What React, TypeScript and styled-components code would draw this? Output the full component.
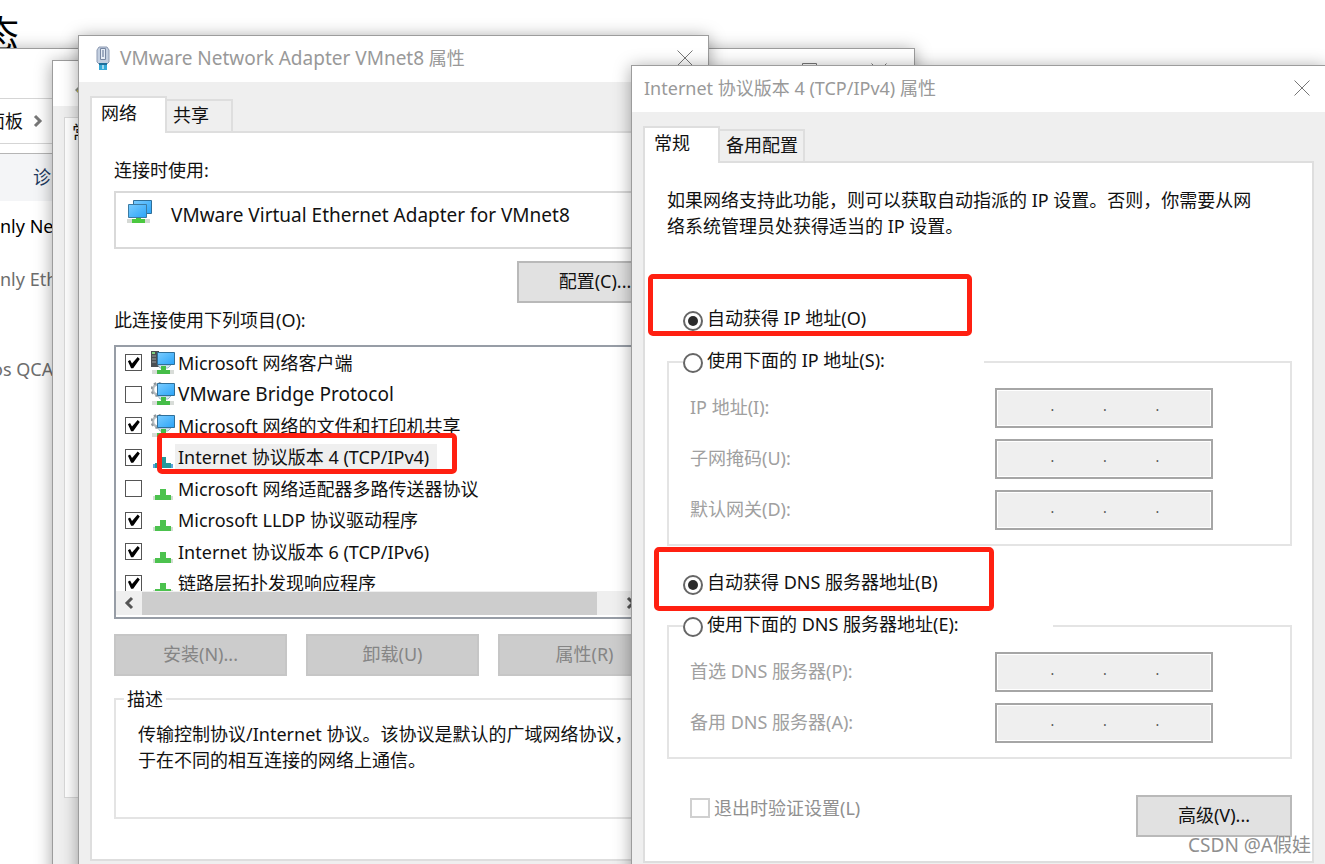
import React from 'react';
import styled, { createGlobalStyle } from 'styled-components';

const GlobalStyle = createGlobalStyle`
  *, *::before, *::after { box-sizing: border-box; }
  body {
    margin: 0;
    background: #fff;
    color: #111;
    font-family: "Noto Sans", "Noto Sans CJK SC", sans-serif;
    font-size: 18px;
    line-height: 26px;
  }
  button, input, fieldset, legend, h1, h2, p, ul { font: inherit; margin: 0; padding: 0; }
`;

const Desktop = styled.main`
  position: relative;
  height: 100vh;
  overflow: hidden;
  white-space: nowrap;
`;

const PageHeading = styled.h1`
  margin: 14px 0 0 -18px;
  font-size: 37px;
  line-height: 40px;
  font-weight: 400;
  color: #000;
`;

/* Device names are set a step larger than the Chinese text */
const DeviceName = styled.span`
  font-size: 19px;
`;

/* Windows */

const Window = styled.section`
  position: absolute;
  display: flex;
  flex-direction: column;
  border: 1px solid #9c9c9c;
  background: #efefef;
  box-shadow: 0 2px 16px rgba(0, 0, 0, 0.36);
`;

const ExplorerWindow = styled(Window)`
  top: 48px;
  left: -1px;
  width: 916px;
  bottom: -40px;
  background: #fff;
`;

const StatusWindow = styled(Window)`
  top: 60px;
  left: 52px;
  width: 560px;
  bottom: -40px;
`;

const AdapterWindow = styled(Window)`
  top: 35px;
  left: 78px;
  width: 631px;
  bottom: -40px;
`;

const ProtocolWindow = styled(Window)`
  top: 65px;
  left: 631px;
  right: -1px;
  bottom: -40px;
`;

const TitleBar = styled.header`
  flex: none;
  display: flex;
  align-items: center;
  height: 46px;
  padding: 0 15px 2px 12px;
  background: #fff;
  color: #999;
`;

const TitleText = styled.h2`
  flex: 1;
  font-weight: 400;
`;

const TitleIcon = styled.span`
  display: flex;
  margin: 0 10px 0 5px;
`;

const IconButton = styled.button`
  display: flex;
  border: 0;
  background: none;
  color: #777;
`;

const WindowBody = styled.div`
  padding: 14px 11px;
`;

/* Tabs */

const TabStrip = styled.div`
  display: flex;
  align-items: flex-end;
  height: 37px;
  margin-bottom: -2px;
  position: relative;
`;

const Tab = styled.button<{ $selected?: boolean }>`
  align-self: ${p => (p.$selected ? 'stretch' : 'flex-end')};
  width: ${p => (p.$selected ? '77px' : 'auto')};
  height: ${p => (p.$selected ? '37px' : '34px')};
  padding: ${p => (p.$selected ? '0 10px 6px 9px' : '0 5px 3px 6px')};
  border: 2px solid #dedede;
  border-left-width: ${p => (p.$selected ? '2px' : '0')};
  border-bottom: ${p => (p.$selected ? '0' : '2px solid #dedede')};
  background: ${p => (p.$selected ? '#fff' : '#efefef')};
  color: #111;
  text-align: left;
`;

const OtherTab = styled(Tab)`
  min-width: 66px;
`;

const TabPanel = styled.div`
  padding: 24px 20px 24px 22px;
  border: 2px solid #dedede;
  background: #fff;
`;

/* Buttons and option controls */

const PushButton = styled.button<{ $wide?: boolean }>`
  width: ${p => (p.$wide ? '173px' : '156px')};
  height: 42px;
  padding-bottom: 2px;
  border: 2px solid #b9b9b9;
  background: #e1e1e1;
  color: #111;
  &:disabled {
    border-color: #c6c6c6;
    background: #ccc;
    color: #858585;
  }
`;

const Checkbox = styled.input<{ $large?: boolean }>`
  appearance: none;
  flex: none;
  width: ${p => (p.$large ? '20px' : '17px')};
  height: ${p => (p.$large ? '20px' : '17px')};
  border: ${p => (p.$large ? '2px solid #d0d0d0' : '1px solid #555')};
  background: #fff;
  &:checked::before {
    content: '';
    display: block;
    height: 100%;
    background: #000;
    clip-path: polygon(13% 42%, 27% 34%, 40% 56%, 78% 14%, 92% 26%, 48% 88%, 34% 88%);
  }
`;

const Radio = styled.input`
  appearance: none;
  flex: none;
  width: 20px;
  height: 20px;
  margin-top: 4px;
  padding: 2px;
  border: 2px solid #666;
  border-radius: 50%;
  background: #fff;
  &:checked {
    padding: 3px;
  }
  &:checked::before {
    content: '';
    display: block;
    width: 10px;
    height: 10px;
    border-radius: 50%;
    background: #2b2b2b;
  }
`;

const OptionLabel = styled.label`
  display: flex;
  align-items: flex-start;
  gap: 4px;
  height: 26px;
  line-height: 22px;
`;

const Highlight = styled.span`
  position: absolute;
  z-index: 1;
  border: 5px solid #ff2011;
  border-radius: 5px;
  pointer-events: none;
`;

/* Groups */

const Group = styled.fieldset`
  min-width: 0;
  border: 2px solid #e4e4e4;
`;

/* Adapter window parts */

const AdapterBox = styled.div`
  display: flex;
  align-items: flex-start;
  gap: 18px;
  height: 58px;
  margin: 8px 0 12px;
  padding: 7px 11px;
  border: 2px solid #d9d9d9;
`;

const AdapterName = styled(DeviceName)`
  padding-top: 2px;
`;

const AdapterPanel = styled(TabPanel)`
  padding-right: 22px;
  padding-bottom: 40px;
`;

const ConfigRow = styled.div`
  display: flex;
  justify-content: flex-end;
  margin-bottom: 4px;
`;

const ListBox = styled.div`
  height: 274px;
  margin-top: 12px;
  border: 2px solid #979da6;
`;

const ItemList = styled.ul`
  display: grid;
  grid-auto-rows: 31px 32px;
  height: 244px;
  overflow: hidden;
  list-style: none;
`;

const Item = styled.li`
  position: relative;
`;

const ItemLabel = styled.label`
  display: flex;
  align-items: center;
  height: 100%;
  padding-left: 9px;
`;

const ItemIcon = styled.svg`
  flex: none;
  width: 24px;
  height: 24px;
  margin-left: 9px;
`;

const ItemText = styled.span<{ $current?: boolean }>`
  padding: 0 8px 0 3px;
  background: ${p => (p.$current ? '#efefef' : 'transparent')};
`;

const ListHighlight = styled(Highlight)`
  top: -8px;
  left: 41px;
  width: 300px;
  height: 41px;
`;

const ScrollBar = styled.div`
  display: flex;
  align-items: center;
  height: 24px;
  background: #efefef;
`;

const ScrollButton = styled(IconButton)`
  width: 26px;
  justify-content: center;
  color: #555;
`;

const ScrollThumb = styled.div`
  width: 455px;
  height: 23px;
  margin-right: 21px;
  background: #cdcdcd;
`;

const ButtonRow = styled.div`
  display: flex;
  gap: 19px;
  margin: 15px 0 10px;
`;

const Description = styled(Group)`
  height: 133px;
  padding: 9px 22px 0;
  legend { margin-left: -14px; padding: 0 3px; }
`;

/* Protocol window parts */

const Intro = styled.p`
  max-width: 601px;
  margin-bottom: 68px;
  white-space: normal;
`;

const AutoOption = styled.div`
  position: relative;
  margin-bottom: 16px;
  padding-left: 16px;
`;

const AddressHighlight = styled(Highlight)`
  top: -33px;
  left: -19px;
  width: 324px;
  height: 62px;
`;

const DnsHighlight = styled(Highlight)`
  top: -24px;
  left: -13px;
  width: 340px;
  height: 64px;
`;

const AddressGroup = styled(Group)<{ $legend: number }>`
  display: block;
  margin-bottom: 25px;
  padding: 13px 77px 14px 21px;
  legend { width: ${p => p.$legend}px; margin-left: -7px; }
`;

const FieldList = styled.div`
  display: flex;
  flex-direction: column;
  gap: 11px;
`;

const FieldRow = styled.div`
  display: flex;
  justify-content: space-between;
  align-items: center;
  color: #a0a0a0;
`;

const FieldLabel = styled.span`
  padding-bottom: 2px;
`;

const IpBox = styled.div`
  display: flex;
  align-items: center;
  width: 218px;
  height: 40px;
  padding: 0 3px 0 5px;
  border: 2px solid #a6a6a6;
  background: #efefef;
  box-shadow: inset 0 0 0 1px #fff;
  color: #555;
  font-size: 14px;
`;

const Octet = styled.input`
  flex: 1;
  min-width: 0;
  height: 26px;
  border: 0;
  background: transparent;
  text-align: center;
`;

const Dot = styled.span`
  width: 4px;
  padding-bottom: 4px;
`;

const Footer = styled.div`
  display: flex;
  justify-content: space-between;
  align-items: flex-start;
  margin-top: 36px;
`;

const ExitOption = styled(OptionLabel)`
  align-items: center;
  padding-left: 23px;
  color: #909090;
`;

const Watermark = styled.div`
  position: absolute;
  right: 14px;
  bottom: 6px;
  font-size: 19px;
  color: #8f8f8f;
  text-shadow: 0 0 2px #fff;
`;

/* Explorer parts */

const ExplorerTitle = styled(TitleBar)`
  height: 49px;
  padding: 0 27px 19px 0;
  justify-content: flex-end;
  align-items: flex-end;
  gap: 54px;
`;

const AddressBar = styled.nav`
  display: flex;
  align-items: center;
  gap: 10px;
  height: 46px;
  margin-bottom: 9px;
  border: 1px solid #d5d5d5;
  border-width: 1px 0;
`;

const Crumb = styled.span`
  margin-left: -13px;
`;

const CommandBar = styled.div`
  display: flex;
  align-items: center;
  height: 48px;
  padding-left: 33px;
  border-top: 1px solid #b5b5b5;
  background: #f4f5f7;
`;

const Command = styled.button`
  border: 0;
  padding-bottom: 2px;
  background: none;
  color: #1e3a5f;
`;

const Connection = styled.p<{ $muted?: boolean; $shift?: boolean }>`
  margin-left: ${p => (p.$shift ? '-8px' : '0')};
  color: ${p => (p.$muted ? '#6d6d6d' : '#000')};
`;

const ConnectionList = styled.div`
  display: grid;
  grid-template-rows: 53px 90px 26px;
  padding-top: 12px;
`;

const StatusTitle = styled(TitleBar)`
  padding-left: 22px;
  height: 45px;
  align-items: flex-end;
  padding-bottom: 12px;
`;

const StatusPanel = styled.div`
  height: 681px;
  margin: 11px;
  border: 1px solid #d9d9d9;
  background: #fff;
  padding: 1px 7px;
`;

/* Drawings */

const CloseIcon = () => (
  <svg width="16" height="16" viewBox="0 0 16 16" fill="none" stroke="currentColor" aria-hidden="true">
    <path d="M.5.5l15 15M15.5.5l-15 15" />
  </svg>
);

const Chevron = ({ back }: { back?: boolean }) => (
  <svg width="10" height="14" viewBox="0 0 10 14" fill="none" stroke="currentColor" strokeWidth="3" aria-hidden="true">
    <path d={back ? 'M8 2L3 7l5 5' : 'M2 2l5 5-5 5'} />
  </svg>
);

const PlugIcon = () => (
  <svg width="14" height="24" viewBox="0 0 14 24" aria-hidden="true">
    <path d="M3 1h8l2 3v12l-2 2H3l-2-2V4z" fill="#c3cfe0" stroke="#8d9ab2" />
    <path d="M4.500 2.500h5v11h-5z" fill="#e6edf6" stroke="#7887a2" />
    <path d="M7 4v7" stroke="#8796b0" strokeWidth="1.500" />
    <path d="M3 17h8v2H3z" fill="#1d6f9b" />
    <path d="M3 19h8v5H3z" fill="#35a9d8" />
    <path d="M6 19h2v4H6z" fill="#9fd8ee" />
  </svg>
);

const ScreenGradient = () => (
  <defs>
    <linearGradient id="screen" x1="0" y1="0" x2="1" y2="1">
      <stop offset="0" stopColor="#7accff" />
      <stop offset="1" stopColor="#2ba4f8" />
    </linearGradient>
  </defs>
);

const AdapterIcon = () => (
  <svg width="26" height="24" viewBox="0 0 26 24" aria-hidden="true">
    <ScreenGradient />
    <path d="M6.500.500h18v13h-18z" fill="url(#screen)" stroke="#2f6f99" />
    <path d="M1.500 4.500h18v13h-18z" fill="url(#screen)" stroke="#3c7ba3" />
    <path d="M0 19h23v4H0z" fill="#d5d9d5" />
    <path d="M9 18h5v1h4v4H5v-4h4z" fill="#4bc83f" />
  </svg>
);

type Kind = 'client' | 'service' | 'protocol';

const NetIcon = ({ kind, current }: { kind: Kind; current?: boolean }) => (
  <ItemIcon viewBox="0 0 24 24" aria-hidden="true">
    {kind === 'protocol' ? (
      <>
        <path d="M2 19h20v4H2z" fill={current ? '#5aa5dc' : '#d3ddd3'} />
        <path d="M9 12h6v6h5v5H4v-5h5z" fill={current ? '#23999a' : '#4cc24e'} />
      </>
    ) : (
      <>
        {kind === 'client' ? (
          <>
            <path d="M0 0h8v16H0z" fill="#4a4f52" />
            <path d="M1 5h4M1 8h4M1 11h4" stroke="#9aa0a3" />
            <path d="M1 1h3v2H1z" fill="#7fd07f" />
          </>
        ) : (
          <>
            <circle cx="7" cy="7.500" r="5" fill="none" stroke="#b4bbbf" strokeWidth="2.500" />
            <circle cx="7" cy="7.500" r="6.500" fill="none" stroke="#8e979c" strokeWidth="2" strokeDasharray="2.500 2.600" />
          </>
        )}
        <path d="M1 19h22v4H1z" fill="#d8dcd8" />
        <path d="M7 14h13l-3 3h-8z" fill="#d9ebf5" stroke="#9db8c8" />
        <path d="M10 15h5v4h4v4H6v-4h4z" fill="#45bd48" />
        <path d="M6.500 1.500h17v12h-17z" fill="url(#screen)" stroke="#2f6f99" />
      </>
    )}
  </ItemIcon>
);

const items: { name: string; kind: Kind; checked: boolean; current?: boolean; device?: boolean }[] = [
  { name: 'Microsoft 网络客户端', kind: 'client', checked: true },
  { name: 'VMware Bridge Protocol', kind: 'service', checked: false, device: true },
  { name: 'Microsoft 网络的文件和打印机共享', kind: 'service', checked: true },
  { name: 'Internet 协议版本 4 (TCP/IPv4)', kind: 'protocol', checked: true, current: true },
  { name: 'Microsoft 网络适配器多路传送器协议', kind: 'protocol', checked: false },
  { name: 'Microsoft LLDP 协议驱动程序', kind: 'protocol', checked: true },
  { name: 'Internet 协议版本 6 (TCP/IPv6)', kind: 'protocol', checked: true },
  { name: '链路层拓扑发现响应程序', kind: 'protocol', checked: true },
];

const IpField = ({ label }: { label: string }) => (
  <FieldRow role="group" aria-label={label}>
    <FieldLabel>{label}</FieldLabel>
    <IpBox>
      {[0, 1, 2, 3].map(n => (
        <React.Fragment key={n}>
          {n > 0 && <Dot>.</Dot>}
          <Octet type="text" disabled aria-label={`${label} ${n + 1}`} />
        </React.Fragment>
      ))}
    </IpBox>
  </FieldRow>
);

const Explorer = () => (
  <ExplorerWindow>
    <ExplorerTitle>
      <IconButton type="button" aria-label="最大化">
        <svg width="16" height="16" viewBox="0 0 16 16" fill="none" stroke="currentColor">
          <path d="M1.500.500h14v14h-14z" />
        </svg>
      </IconButton>
      <IconButton type="button" aria-label="关闭"><CloseIcon /></IconButton>
    </ExplorerTitle>
    <AddressBar>
      <Crumb>面板</Crumb>
      <IconButton type="button" aria-label="展开"><Chevron /></IconButton>
    </AddressBar>
    <CommandBar><Command type="button">诊断</Command></CommandBar>
    <ConnectionList>
      <Connection>nly Ne</Connection>
      <Connection $muted>nly Eth</Connection>
      <Connection $muted $shift>os QCA</Connection>
    </ConnectionList>
  </ExplorerWindow>
);

const Status = () => (
  <StatusWindow>
    <StatusTitle>
      <svg width="8" height="8" viewBox="0 0 8 8" aria-hidden="true">
        <path d="M0 4l4-4h4v8H4z" fill="#8a8f86" />
        <path d="M2 4h3v2H2z" fill="#c3b64a" />
      </svg>
    </StatusTitle>
    <StatusPanel>常</StatusPanel>
  </StatusWindow>
);

const AdapterProperties = () => (
  <AdapterWindow>
    <TitleBar>
      <TitleIcon><PlugIcon /></TitleIcon>
      <TitleText><DeviceName>VMware Network Adapter VMnet8</DeviceName> 属性</TitleText>
      <IconButton type="button" aria-label="关闭"><CloseIcon /></IconButton>
    </TitleBar>
    <WindowBody>
      <TabStrip role="tablist">
        <Tab type="button" role="tab" aria-selected="true" $selected>网络</Tab>
        <OtherTab type="button" role="tab" aria-selected="false">共享</OtherTab>
      </TabStrip>
      <AdapterPanel role="tabpanel">
        <p>连接时使用:</p>
        <AdapterBox>
          <AdapterIcon />
          <AdapterName>VMware Virtual Ethernet Adapter for VMnet8</AdapterName>
        </AdapterBox>
        <ConfigRow><PushButton type="button">配置(C)...</PushButton></ConfigRow>
        <p>此连接使用下列项目(O):</p>
        <ListBox>
          <ItemList>
            {items.map(item => (
              <Item key={item.name}>
                <ItemLabel>
                  <Checkbox type="checkbox" defaultChecked={item.checked} />
                  <NetIcon kind={item.kind} current={item.current} />
                  <ItemText as={item.device ? DeviceItemText : undefined} $current={item.current}>{item.name}</ItemText>
                </ItemLabel>
                {item.current && <ListHighlight />}
              </Item>
            ))}
          </ItemList>
          <ScrollBar>
            <ScrollButton type="button" aria-label="向左滚动"><Chevron back /></ScrollButton>
            <ScrollThumb />
            <ScrollButton type="button" aria-label="向右滚动"><Chevron /></ScrollButton>
          </ScrollBar>
        </ListBox>
        <ButtonRow>
          <PushButton type="button" $wide disabled>安装(N)...</PushButton>
          <PushButton type="button" $wide disabled>卸载(U)</PushButton>
          <PushButton type="button" $wide disabled>属性(R)</PushButton>
        </ButtonRow>
        <Description>
          <legend>描述</legend>
          <p>传输控制协议/Internet 协议。该协议是默认的广域网络协议，<br />于在不同的相互连接的网络上通信。</p>
        </Description>
      </AdapterPanel>
    </WindowBody>
  </AdapterWindow>
);

const DeviceItemText = styled(DeviceName)`
  padding-left: 3px;
`;

const ProtocolProperties = () => (
  <ProtocolWindow>
    <TitleBar>
      <TitleText>Internet 协议版本 4 (TCP/IPv4) 属性</TitleText>
      <IconButton type="button" aria-label="关闭"><CloseIcon /></IconButton>
    </TitleBar>
    <WindowBody>
      <TabStrip role="tablist">
        <Tab type="button" role="tab" aria-selected="true" $selected>常规</Tab>
        <OtherTab type="button" role="tab" aria-selected="false">备用配置</OtherTab>
      </TabStrip>
      <TabPanel role="tabpanel">
        <Intro>如果网络支持此功能，则可以获取自动指派的 IP 设置。否则，你需要从网络系统管理员处获得适当的 IP 设置。</Intro>
        <AutoOption>
          <OptionLabel><Radio type="radio" name="ip" defaultChecked />自动获得 IP 地址(O)</OptionLabel>
          <AddressHighlight />
        </AutoOption>
        <AddressGroup $legend={301}>
          <legend><OptionLabel><Radio type="radio" name="ip" />使用下面的 IP 地址(S):</OptionLabel></legend>
          <FieldList>
            <IpField label="IP 地址(I):" />
            <IpField label="子网掩码(U):" />
            <IpField label="默认网关(D):" />
          </FieldList>
        </AddressGroup>
        <AutoOption>
          <OptionLabel><Radio type="radio" name="dns" defaultChecked />自动获得 DNS 服务器地址(B)</OptionLabel>
          <DnsHighlight />
        </AutoOption>
        <AddressGroup $legend={370}>
          <legend><OptionLabel><Radio type="radio" name="dns" />使用下面的 DNS 服务器地址(E):</OptionLabel></legend>
          <FieldList>
            <IpField label="首选 DNS 服务器(P):" />
            <IpField label="备用 DNS 服务器(A):" />
          </FieldList>
        </AddressGroup>
        <Footer>
          <ExitOption><Checkbox type="checkbox" $large disabled />退出时验证设置(L)</ExitOption>
          <PushButton type="button">高级(V)...</PushButton>
        </Footer>
      </TabPanel>
    </WindowBody>
  </ProtocolWindow>
);

export default function App() {
  return (
    <>
      <GlobalStyle />
      <Desktop lang="zh-CN">
        <PageHeading>态</PageHeading>
        <Explorer />
        <Status />
        <AdapterProperties />
        <ProtocolProperties />
        <Watermark>CSDN @A假娃</Watermark>
      </Desktop>
    </>
  );
}
